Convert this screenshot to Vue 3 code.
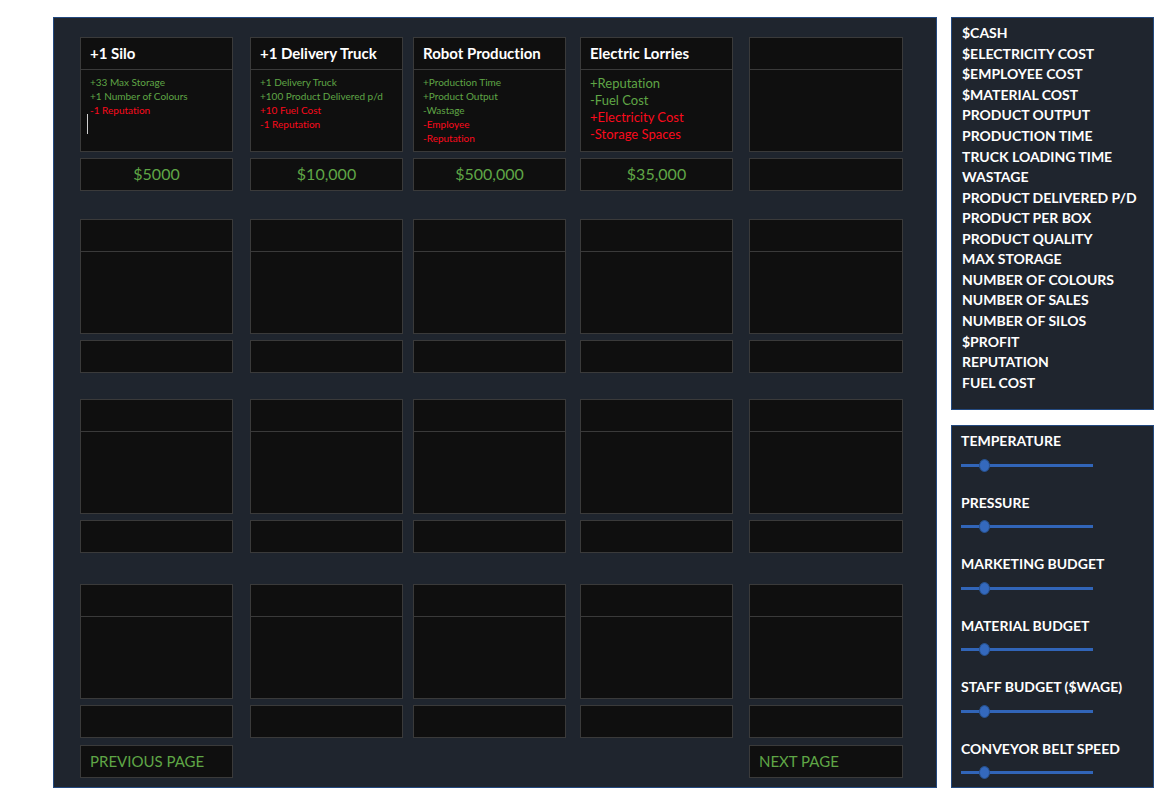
<script setup>
import { reactive } from 'vue'

const empty = () => ({ title: '', effects: [], price: '' })
const good = (text) => ({ text, kind: 'good' })
const bad = (text) => ({ text, kind: 'bad' })

const shelves = [
  [
    {
      title: '+1 Silo',
      effects: [good('+33 Max Storage'), good('+1 Number of Colours'), bad('-1 Reputation')],
      price: '$5000',
      caret: true
    },
    {
      title: '+1 Delivery Truck',
      effects: [
        good('+1 Delivery Truck'),
        good('+100 Product Delivered p/d'),
        bad('+10 Fuel Cost'),
        bad('-1 Reputation')
      ],
      price: '$10,000'
    },
    {
      title: 'Robot Production',
      effects: [
        good('+Production Time'),
        good('+Product Output'),
        good('-Wastage'),
        bad('-Employee'),
        bad('-Reputation')
      ],
      price: '$500,000'
    },
    {
      title: 'Electric Lorries',
      effects: [good('+Reputation'), good('-Fuel Cost'), bad('+Electricity Cost'), bad('-Storage Spaces')],
      price: '$35,000',
      large: true
    },
    empty()
  ],
  Array.from({ length: 5 }, empty),
  Array.from({ length: 5 }, empty),
  Array.from({ length: 5 }, empty)
]

const stats = [
  '$CASH',
  '$ELECTRICITY COST',
  '$EMPLOYEE COST',
  '$MATERIAL COST',
  'PRODUCT OUTPUT',
  'PRODUCTION TIME',
  'TRUCK LOADING TIME',
  'WASTAGE',
  'PRODUCT DELIVERED P/D',
  'PRODUCT PER BOX',
  'PRODUCT QUALITY',
  'MAX STORAGE',
  'NUMBER OF COLOURS',
  'NUMBER OF SALES',
  'NUMBER OF SILOS',
  '$PROFIT',
  'REPUTATION',
  'FUEL COST'
]

const controls = reactive([
  { id: 'temperature', label: 'TEMPERATURE', value: 15 },
  { id: 'pressure', label: 'PRESSURE', value: 15 },
  { id: 'marketing', label: 'MARKETING BUDGET', value: 15 },
  { id: 'material', label: 'MATERIAL BUDGET', value: 15 },
  { id: 'staff', label: 'STAFF BUDGET ($WAGE)', value: 15 },
  { id: 'conveyor', label: 'CONVEYOR BELT SPEED', value: 15 }
])
</script>

<template>
  <div class="page">
    <main class="panel shop">
      <section v-for="(shelf, s) in shelves" :key="s" class="shelf">
        <article v-for="(item, i) in shelf" :key="i" class="item">
          <div class="card">
            <h2 class="title">{{ item.title }}</h2>
            <ul class="effects" :class="{ large: item.large }">
              <li v-for="e in item.effects" :key="e.text" :class="e.kind">{{ e.text }}</li>
            </ul>
            <span v-if="item.caret" class="caret"></span>
          </div>
          <p class="price">{{ item.price }}</p>
        </article>
      </section>
      <nav class="shelf pager">
        <button type="button" class="page-button">PREVIOUS PAGE</button>
        <button type="button" class="page-button next">NEXT PAGE</button>
      </nav>
    </main>

    <aside class="side">
      <ul class="panel stats">
        <li v-for="s in stats" :key="s">{{ s }}</li>
      </ul>
      <section class="panel controls">
        <div v-for="c in controls" :key="c.id" class="control">
          <label :for="c.id">{{ c.label }}</label>
          <input :id="c.id" v-model="c.value" type="range" min="0" max="100" />
        </div>
      </section>
    </aside>
  </div>
</template>

<style>
body {
  margin: 0;
  background: #fff;
}
</style>

<style scoped>
.page {
  display: flex;
  gap: 14px;
  padding: 17px 6px 23px 53px;
  font-family: Lato, 'Liberation Sans', sans-serif;
  font-size: 15px;
  line-height: 20px;
  font-variant-ligatures: none;
  color: #fff;
}

.panel {
  box-sizing: border-box;
  margin: 0;
  background: #1f252e;
  border: 1px solid #23497f;
}

.shop {
  flex: 1;
  padding: 19px 33px 9px 26px;
}

.shelf {
  display: grid;
  grid-template-columns: 153fr 17fr 153fr 10fr 153fr 14fr 153fr 16fr 154fr;
}

.shelf:nth-child(2) {
  margin-top: 28px;
}

.shelf:nth-child(3) {
  margin-top: 26px;
}

.shelf:nth-child(4) {
  margin-top: 31px;
}

.pager {
  margin-top: 7px;
}

.item {
  display: flex;
  flex-direction: column;
  gap: 6px;
  min-width: 0;
}

.item:nth-child(2) {
  grid-column: 3;
}

.item:nth-child(3) {
  grid-column: 5;
}

.item:nth-child(4) {
  grid-column: 7;
}

.item:nth-child(5),
.next {
  grid-column: 9;
}

.card,
.price,
.page-button {
  box-sizing: border-box;
  background: #0f0f0f;
  border: 1px solid #3a3a3a;
}

.card {
  position: relative;
  min-height: 115px;
}

.title {
  box-sizing: border-box;
  min-height: 32px;
  margin: 0;
  padding: 5px 9px 6px;
  border-bottom: 1px solid #3a3a3a;
  font-size: 15px;
  font-weight: 700;
  line-height: 20px;
  white-space: nowrap;
}

.effects {
  margin: 0;
  padding: 5px 9px 0;
  list-style: none;
  font-size: 10px;
  line-height: 14px;
  white-space: nowrap;
}

.effects.large {
  font-size: 13px;
  line-height: 17px;
}

.good {
  color: #5fa646;
}

.bad {
  color: #fb0a1c;
}

.caret {
  position: absolute;
  left: 6px;
  top: 76px;
  width: 1px;
  height: 20px;
  background: #d0d0d0;
}

.price {
  min-height: 33px;
  margin: 0;
  padding: 5px 9px 6px;
  color: #5fa646;
  font-size: 16px;
  text-align: center;
}

.page-button {
  min-height: 33px;
  padding: 5px 9px 6px;
  color: #5fa646;
  font-family: inherit;
  font-size: 15px;
  line-height: 20px;
  text-align: left;
}

.side {
  display: grid;
  grid-template-columns: 100%;
  grid-template-rows: 393fr 363fr;
  flex: 0 0 203px;
  gap: 15px;
  font-size: 14px;
  font-weight: 700;
  white-space: nowrap;
}

.stats {
  display: grid;
  grid-auto-rows: 1fr;
  align-items: center;
  padding: 5px 10px 16px;
  list-style: none;
}

.controls {
  display: flex;
  flex-direction: column;
  justify-content: space-between;
  padding: 5px 9px 6px;
}

.control {
  display: flex;
  flex-direction: column;
  gap: 6px;
}

.control input {
  appearance: none;
  width: 132px;
  height: 16px;
  margin: 0;
  background: transparent;
}

.control input::-webkit-slider-runnable-track {
  height: 3px;
  background: #3165b8;
}

.control input::-webkit-slider-thumb {
  appearance: none;
  box-sizing: border-box;
  width: 11px;
  height: 13px;
  margin-top: -5px;
  border: 1px solid #28528f;
  border-radius: 50%;
  background: #3469bd;
}
</style>
